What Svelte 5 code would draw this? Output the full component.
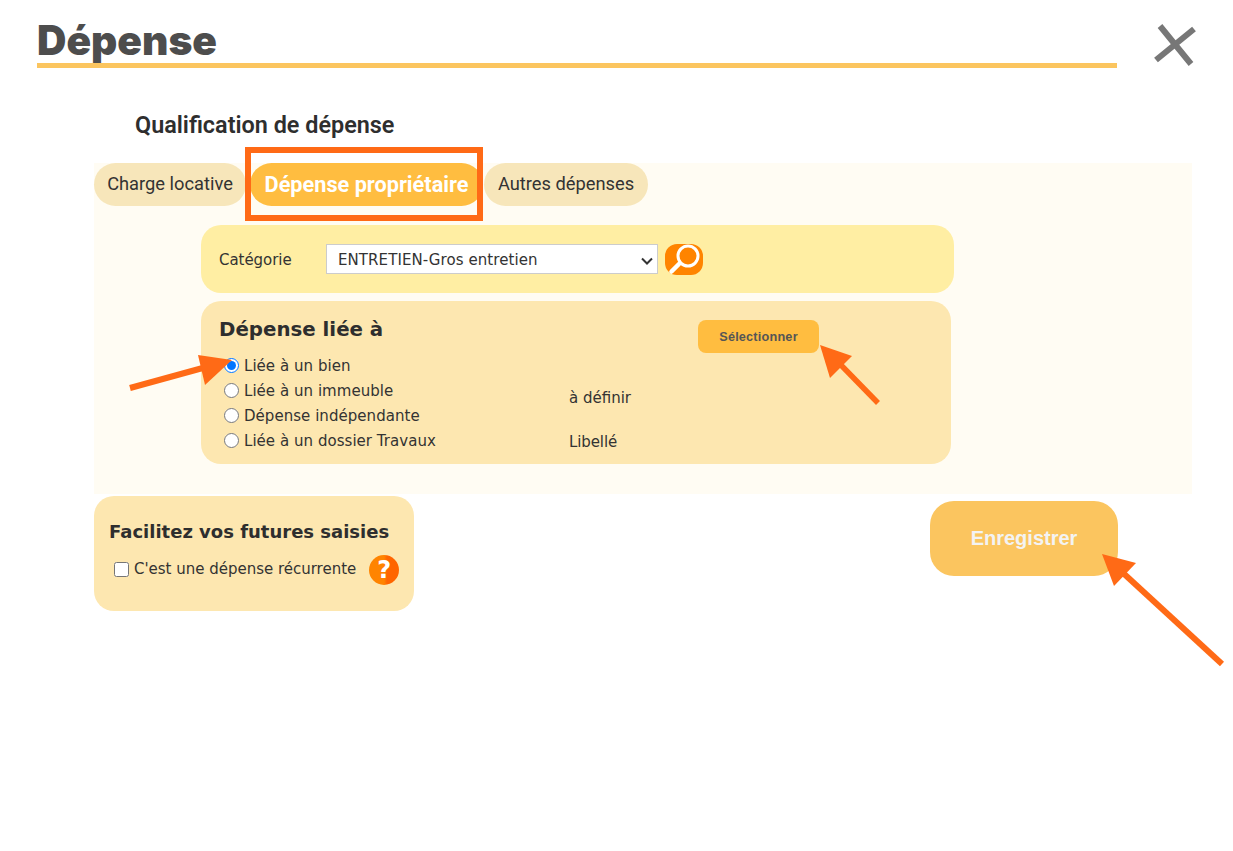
<script>
  let kind = 'bien';
</script>

<div class="page">
  <header class="head">
    <h1>Dépense</h1>
    <button class="close" aria-label="Fermer">
      <svg width="44" height="44" viewBox="0 0 44 44"><path d="M7 3 L38 41 M41 6 L3 37" stroke="#777" stroke-width="6" fill="none"/></svg>
    </button>
  </header>

  <h2>Qualification de dépense</h2>

  <section class="panel">
    <div class="tabs">
      <button class="tab t1">Charge locative</button>
      <button class="tab t2 active">Dépense propriétaire</button>
      <button class="tab t3">Autres dépenses</button>
    </div>

    <div class="cat">
      <span class="cat-label">Catégorie</span>
      <select class="sel"><option>ENTRETIEN-Gros entretien</option></select>
      <button class="search" aria-label="Rechercher">
        <svg width="38" height="31" viewBox="0 0 38 31"><circle cx="23" cy="12" r="10" fill="none" stroke="#fff" stroke-width="3"/><path d="M14 20 L6.5 27.5" stroke="#fff" stroke-width="4.5" stroke-linecap="round"/></svg>
      </button>
    </div>

    <div class="link">
      <div class="link-left">
        <h3>Dépense liée à</h3>
        <label><input type="radio" bind:group={kind} value="bien" /> Liée à un bien</label>
        <label><input type="radio" bind:group={kind} value="imm" /> Liée à un immeuble</label>
        <label><input type="radio" bind:group={kind} value="ind" /> Dépense indépendante</label>
        <label><input type="radio" bind:group={kind} value="trv" /> Liée à un dossier Travaux</label>
      </div>
      <div class="link-right">
        <button class="pick">Sélectionner</button>
        <span class="v1">à définir</span>
        <span class="v2">Libellé</span>
      </div>
    </div>
  </section>

  <div class="bottom">
    <div class="future">
      <h3>Facilitez vos futures saisies</h3>
      <div class="rec">
        <label><input type="checkbox" /> C'est une dépense récurrente</label>
        <span class="help">?</span>
      </div>
    </div>
    <button class="save">Enregistrer</button>
  </div>

  <div class="hl"></div>
  <svg class="notes" width="1233" height="851" viewBox="0 0 1233 851">
    <g fill="#ff6a16" stroke="#ff6a16">
      <path d="M130 388 L210 366" stroke-width="6" fill="none"/>
      <path d="M232 360 L198 355 L205 385 Z" stroke="none"/>
      <path d="M878 403 L838 362" stroke-width="5.5" fill="none"/>
      <path d="M820 345 L852 356 L830 378 Z" stroke="none"/>
      <path d="M1222 664 L1122 572" stroke-width="6" fill="none"/>
      <path d="M1102 554 L1136 563 L1114 586 Z" stroke="none"/>
    </g>
  </svg>
</div>

<style>
  :global(body) { margin: 0; background: #fff; }
  .page { position: relative; width: 1233px; height: 851px; overflow: hidden; font-family: "DejaVu Sans", sans-serif; color: #333; }
  button { border: 0; padding: 0; cursor: pointer; }

  .head { display: flex; align-items: flex-start; padding: 23px 36px 0 37px; }
  h1 { margin: 0; width: 1080px; height: 40px; border-bottom: 5px solid #fbc55f; font: 900 40.7px/36px Inter, sans-serif; color: #4d4d4d; box-sizing: content-box; }
  .close { margin-left: 36px; background: none; width: 44px; height: 44px; }

  h2 { margin: 42px 0 0 135px; font: 600 23.4px/30px Roboto, sans-serif; color: #2e2e2e; height: 30px; }

  .panel { margin: 23px 0 0 94px; width: 1098px; height: 331px; background: #fffcf3; box-sizing: border-box; }
  .tabs { display: flex; height: 43px; }
  .tab { height: 43px; border-radius: 22px; background: #f7e6ba; color: #333; font: 400 18.3px/42px Roboto, sans-serif; padding-bottom: 2px; }
  .t1 { width: 152px; }
  .t2 { width: 233px; margin-left: 4px; background: #ffbd40; color: #fff; font-weight: 700; font-size: 21.7px; padding-bottom: 0; }
  .t3 { width: 164px; margin-left: 1px; }

  .cat { display: flex; align-items: center; margin: 19px 0 0 107px; width: 753px; height: 68px; background: #ffeea3; border-radius: 20px; box-sizing: border-box; padding-left: 18px; font-size: 15px; }
  .cat-label { width: 107px; padding-top: 2px; letter-spacing: -0.05px; }
  .sel { appearance: none; width: 332px; height: 30px; font: 15px "DejaVu Sans", sans-serif; letter-spacing: .08px; color: #333; background: #fff url("data:image/svg+xml,%3Csvg xmlns='http://www.w3.org/2000/svg' width='12' height='8'%3E%3Cpath d='M1 1.5 L6 6.5 L11 1.5' fill='none' stroke='%23333' stroke-width='2'/%3E%3C/svg%3E") no-repeat 314px 12px; border: 1px solid #ccc; padding: 2px 0 0 11px; }
  .search { margin-left: 7px; width: 38px; height: 31px; background: #ff8400; border-radius: 12px; display: flex; }

  .link { display: flex; margin: 8px 0 0 107px; width: 750px; height: 163px; background: #fde7b0; border-radius: 20px; box-sizing: border-box; padding: 0 0 0 18px; font-size: 15px; }
  .link-left { width: 350px; display: flex; flex-direction: column; }
  h3 { margin: 0; font-weight: 700; color: #2e2e2e; }
  .link-left h3 { font-size: 19.8px; line-height: 26px; margin: 16px 0 10px; }
  .link-left label { display: flex; align-items: center; height: 25px; letter-spacing: 0.04px; }
  input[type=radio] { width: 15px; height: 15px; margin: 0 5px; }
  .link-right { position: relative; flex: 1; display: flex; flex-direction: column; align-items: flex-start; }
  .pick { margin: 19px 0 0 129px; width: 121px; height: 33px; border-radius: 8px; background: #ffbd40; color: #555; font: 700 12.7px "Liberation Sans", sans-serif; letter-spacing: .2px; }
  .v1 { margin-top: 35px; line-height: 20px; }
  .v2 { margin-top: 24px; line-height: 20px; letter-spacing: -0.1px; }

  .bottom { display: flex; align-items: flex-start; margin: 2px 0 0 94px; }
  .future { width: 320px; height: 115px; background: #fde7b0; border-radius: 20px; box-sizing: border-box; padding: 24px 15px 0; }
  .future h3 { font-size: 18px; line-height: 24px; white-space: nowrap; }
  .rec { display: flex; align-items: flex-start; margin: 13px 0 0 5px; font-size: 15px; }
  .rec label { display: flex; align-items: center; height: 24px; white-space: nowrap; letter-spacing: -0.01px; }
  input[type=checkbox] { width: 15px; height: 15px; margin: 0 5px 0 0; }
  .help { flex: none; margin: -2px 0 0 13px; width: 30px; height: 30px; border-radius: 50%; background: linear-gradient(90deg, #ff8400, #ff8400 50%, #ff6500 60%); color: #fff; font: 700 24px/30px "DejaVu Sans", sans-serif; text-align: center; }
  .save { margin: 5px 0 0 516px; width: 188px; height: 75px; border-radius: 24px; background: #fbc55f; color: #f3f3f3; font: 700 20px "Liberation Sans", sans-serif; }

  .hl { position: absolute; left: 245px; top: 147px; width: 238px; height: 74px; box-sizing: border-box; border: 6px solid #ff6a16; }
  .notes { position: absolute; left: 0; top: 0; pointer-events: none; }
</style>
